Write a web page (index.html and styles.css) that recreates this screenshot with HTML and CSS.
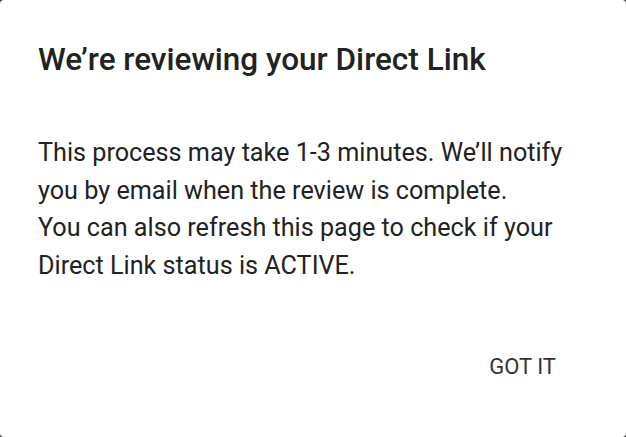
FILE: index.html
```html
<!DOCTYPE html>
<html>
<head>
<meta charset="utf-8">
<link rel="stylesheet" href="styles.css">
</head>
<body>
<div class="dialog">
  <h1 class="title">We’re reviewing your Direct Link</h1>
  <p class="text">This process may take 1-3 minutes. We’ll notify<br>you by email when the review is complete.<br>You can also refresh this page to check if your<br>Direct Link status is ACTIVE.</p>
  <div class="actions"><button class="btn">GOT IT</button></div>
</div>
</body>
</html>
```
FILE: styles.css
```css
html, body {
  margin: 0;
  padding: 0;
  background: #3a3a3a;
}
.dialog {
  box-sizing: border-box;
  width: 626px;
  height: 437px;
  background: #fff;
  border-radius: 4px;
  padding: 40px 70px 0 38px;
  font-family: Roboto, "Liberation Sans", sans-serif;
  display: flex;
  flex-direction: column;
}
.title {
  margin: 0;
  font-size: 31.5px;
  line-height: 40px;
  font-weight: 500;
  color: #222;
  white-space: nowrap;
}
.text {
  margin: 54px 0 0 0;
  font-size: 25.2px;
  line-height: 37.7px;
  font-weight: 400;
  color: #222;
  white-space: nowrap;
}
.actions {
  display: flex;
  justify-content: flex-end;
  margin-top: 69px;
}
.btn {
  border: 0;
  background: transparent;
  padding: 0;
  font-family: inherit;
  font-size: 22px;
  line-height: 26px;
  font-weight: 400;
  color: #333;
}
```
